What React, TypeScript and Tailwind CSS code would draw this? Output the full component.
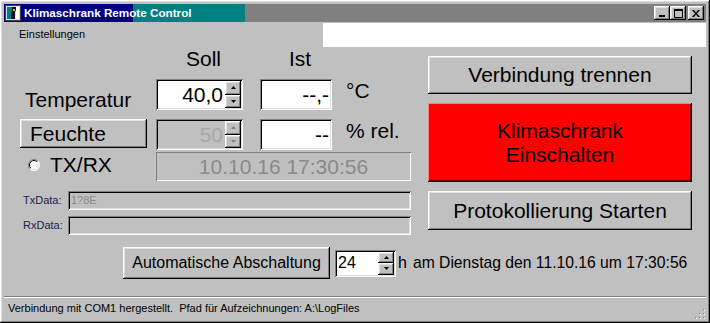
const raised =
  "shadow-[inset_-1px_-1px_#000,inset_1px_1px_#fff,inset_-2px_-2px_#808080,inset_2px_2px_#dfdfdf]";
const sunken =
  "shadow-[inset_1px_1px_#808080,inset_-1px_-1px_#fff,inset_2px_2px_#000,inset_-2px_-2px_#dfdfdf]";
const thinSunken = "shadow-[inset_1px_1px_#808080,inset_-1px_-1px_#fff]";

// Pfeile der Drehfelder
function Arrows({ disabled = false }: { disabled?: boolean }) {
  const fill = disabled ? "#808080" : "#000";
  return (
    <div className="flex flex-col w-[16px] h-full">
      <div className={`flex-1 flex items-center justify-center bg-[#c0c0c0] ${raised}`}>
        <svg width="5" height="3" viewBox="0 0 5 3">
          <path d="M2.5 0L5 3H0z" fill={fill} />
        </svg>
      </div>
      <div className={`flex-1 flex items-center justify-center bg-[#c0c0c0] ${raised}`}>
        <svg width="5" height="3" viewBox="0 0 5 3">
          <path d="M0 0H5L2.5 3z" fill={fill} />
        </svg>
      </div>
    </div>
  );
}

function Radio() {
  return (
    <svg width="12" height="12" viewBox="0 0 12 12">
      <circle cx="6" cy="6" r="5.5" fill="#fff" />
      <path d="M9.9 2.1A5.5 5.5 0 0 0 2.1 9.9" stroke="#808080" fill="none" />
      <path d="M2.1 9.9A5.5 5.5 0 0 0 9.9 2.1" stroke="#fff" fill="none" />
      <path d="M9.2 2.8A4.5 4.5 0 0 0 2.8 9.2" stroke="#000" fill="none" />
      <path d="M2.8 9.2A4.5 4.5 0 0 0 9.2 2.8" stroke="#dfdfdf" fill="none" />
    </svg>
  );
}

export default function App() {
  return (
    <div
      className={`w-[710px] h-[323px] bg-[#c0c0c0] p-[4px] flex flex-col text-black font-['Liberation_Sans',Arial,sans-serif] ${raised}`}
    >
      {/* Titelleiste */}
      <div className="h-[18px] flex items-center bg-[linear-gradient(to_right,#000080_129px,#008080_129px,#008080_241px,#808080_241px)]">
        <svg width="16" height="16" viewBox="0 0 16 16" className="ml-[1px]">
          <rect x="0.5" y="0.5" width="15" height="15" fill="#dfdfdf" stroke="#404040" />
          <rect x="2" y="2" width="6" height="12" fill="#008080" />
          <path d="M7 2h4v3l-1 2v7H6V8l1-2z" fill="#101030" />
          <rect x="8" y="4" width="2" height="2" fill="#c0c000" />
          <rect x="11" y="2" width="3" height="12" fill="#fff" />
        </svg>
        <span className="ml-[3px] text-[11.7px] font-bold text-white leading-none">
          Klimaschrank Remote Control
        </span>
        <div className="ml-auto mr-[2px] flex items-center">
          <div className={`w-[16px] h-[14px] bg-[#c0c0c0] flex items-center justify-center ${raised}`}>
            <svg width="8" height="7" viewBox="0 0 8 7">
              <rect x="1" y="5" width="6" height="2" fill="#000" />
            </svg>
          </div>
          <div className={`w-[16px] h-[14px] bg-[#c0c0c0] flex items-center justify-center ${raised}`}>
            <svg width="9" height="9" viewBox="0 0 9 9">
              <path d="M0.5 1.5h8v7h-8z" fill="none" stroke="#000" />
              <rect x="0" y="0" width="9" height="2" fill="#000" />
            </svg>
          </div>
          <div className={`ml-[2px] w-[16px] h-[14px] bg-[#c0c0c0] flex items-center justify-center ${raised}`}>
            <svg width="8" height="7" viewBox="0 0 8 7">
              <path d="M0 0h2l2 2.5L6 0h2L5 3.5 8 7H6L4 4.5 2 7H0l3-3.5z" fill="#000" />
            </svg>
          </div>
        </div>
      </div>

      {/* Menüleiste */}
      <div className="h-[25px] flex items-start">
        <span className="ml-[15px] mt-[6px] text-[11px] leading-[13px]">Einstellungen</span>
        <div className="ml-auto mt-[1px] w-[383px] h-[24px] bg-white" />
      </div>

      {/* Inhalt */}
      <div className="flex-1 flex flex-col">
        <div className="flex">
          {/* linke Spalte */}
          <div className="w-[407px] flex flex-col">
            <div className="h-[24px] flex text-[21px] leading-[24px]">
              <div className="w-[152px]" />
              <div className="w-[87px] pl-[8px] text-center">Soll</div>
              <div className="ml-[17px] w-[72px] pl-[8px] text-center">Ist</div>
            </div>

            <div className="mt-[8px] h-[31px] flex items-start text-[21px] leading-[24px]">
              <div className="w-[152px] pl-[21px] pt-[9px]">Temperatur</div>
              <div className={`w-[87px] h-[31px] bg-white p-[2px] flex ${sunken}`}>
                <div className="flex-1 flex items-center justify-end pr-[2px]">40,0</div>
                <Arrows />
              </div>
              <div className={`ml-[17px] w-[72px] h-[31px] bg-white p-[2px] flex items-center justify-end pr-[3px] ${sunken}`}>
                --,-
              </div>
              <div className="ml-[14px]">°C</div>
            </div>

            <div className="mt-[9px] h-[31px] flex items-start text-[21px] leading-[24px]">
              <div className="w-[152px] pl-[16px]">
                <button className={`w-[127px] h-[29px] bg-[#c0c0c0] flex items-center pl-[10px] ${raised}`}>
                  Feuchte
                </button>
              </div>
              <div className={`w-[87px] h-[31px] bg-[#c0c0c0] p-[2px] flex ${sunken}`}>
                <div className="flex-1 flex items-center justify-end pr-[2px] text-[#a8a8a8]">50</div>
                <Arrows disabled />
              </div>
              <div className={`ml-[17px] w-[72px] h-[31px] bg-white p-[2px] flex items-center justify-end pr-[3px] ${sunken}`}>
                --
              </div>
              <div className="ml-[14px]">% rel.</div>
            </div>

            <div className="mt-[2px] h-[29px] flex items-start text-[21px] leading-[24px]">
              <div className="w-[152px] flex items-start">
                <div className="ml-[24px] mt-[7px]">
                  <Radio />
                </div>
                <span className="ml-[10px] mt-[1px]">TX/RX</span>
              </div>
              <div className={`w-[255px] h-[29px] flex items-center justify-center text-[#8a8a8a] ${thinSunken}`}>
                10.10.16 17:30:56
              </div>
            </div>

            <div className="mt-[10px] h-[19px] flex items-center text-[11px]">
              <div className="w-[64px] pl-[19px] text-[#20204a]">TxData:</div>
              <div className={`w-[343px] h-[19px] flex items-center pl-[3px] text-[#8a8a8a] ${sunken}`}>
                1?8E
              </div>
            </div>
            <div className="mt-[6px] h-[19px] flex items-center text-[11px]">
              <div className="w-[64px] pl-[19px] text-[#20204a]">RxData:</div>
              <div className={`w-[343px] h-[19px] ${sunken}`} />
            </div>
          </div>

          {/* rechte Spalte */}
          <div className="ml-[17px] w-[264px] flex flex-col pt-[9px] text-[21px] leading-[24px]">
            <button className={`h-[38px] bg-[#c0c0c0] flex items-center justify-center ${raised}`}>
              Verbindung trennen
            </button>
            <button
              className={`mt-[9px] h-[79px] bg-[#ff0000] flex flex-col items-center justify-center shadow-[inset_-1px_-1px_#000,inset_1px_1px_#ff8080,inset_-2px_-2px_#600000]`}
            >
              <span>Klimaschrank</span>
              <span>Einschalten</span>
            </button>
            <button className={`mt-[9px] h-[39px] bg-[#c0c0c0] flex items-center justify-center ${raised}`}>
              Protokollierung Starten
            </button>
          </div>
        </div>

        {/* Abschaltung */}
        <div className="mt-[12px] h-[32px] flex items-center text-[16px] leading-[20px]">
          <button className={`ml-[119px] w-[207px] h-[32px] bg-[#c0c0c0] flex items-center justify-center ${raised}`}>
            Automatische Abschaltung
          </button>
          <div className={`ml-[5px] w-[61px] h-[27px] bg-white p-[2px] flex ${sunken}`}>
            <div className="flex-1 flex items-center pl-[1px]">24</div>
            <Arrows />
          </div>
          <span className="ml-[2px]">h</span>
          <span className="ml-[6px] text-[15.7px]">am Dienstag den 11.10.16 um 17:30:56</span>
        </div>
      </div>

      {/* Statusleiste */}
      <div className="h-[23px] flex flex-col">
        <div className="h-px bg-[#808080]" />
        <div className="h-px bg-white" />
        <div className="flex-1 flex items-center justify-between pl-[4px]">
          <span className="text-[11px] whitespace-pre">
            Verbindung mit COM1 hergestellt.  Pfad für Aufzeichnungen: A:\LogFiles
          </span>
          <svg width="12" height="12" viewBox="0 0 12 12" className="self-end mr-[1px]">
            <rect x="10" y="2" width="1" height="1" fill="#808080" />
            <rect x="10" y="6" width="1" height="1" fill="#808080" />
            <rect x="6" y="6" width="1" height="1" fill="#808080" />
            <rect x="10" y="10" width="1" height="1" fill="#808080" />
            <rect x="6" y="10" width="1" height="1" fill="#808080" />
            <rect x="2" y="10" width="1" height="1" fill="#808080" />
            <rect x="11" y="3" width="1" height="1" fill="#fff" />
            <rect x="11" y="7" width="1" height="1" fill="#fff" />
            <rect x="7" y="7" width="1" height="1" fill="#fff" />
            <rect x="11" y="11" width="1" height="1" fill="#fff" />
            <rect x="7" y="11" width="1" height="1" fill="#fff" />
            <rect x="3" y="11" width="1" height="1" fill="#fff" />
          </svg>
        </div>
      </div>
    </div>
  );
}
